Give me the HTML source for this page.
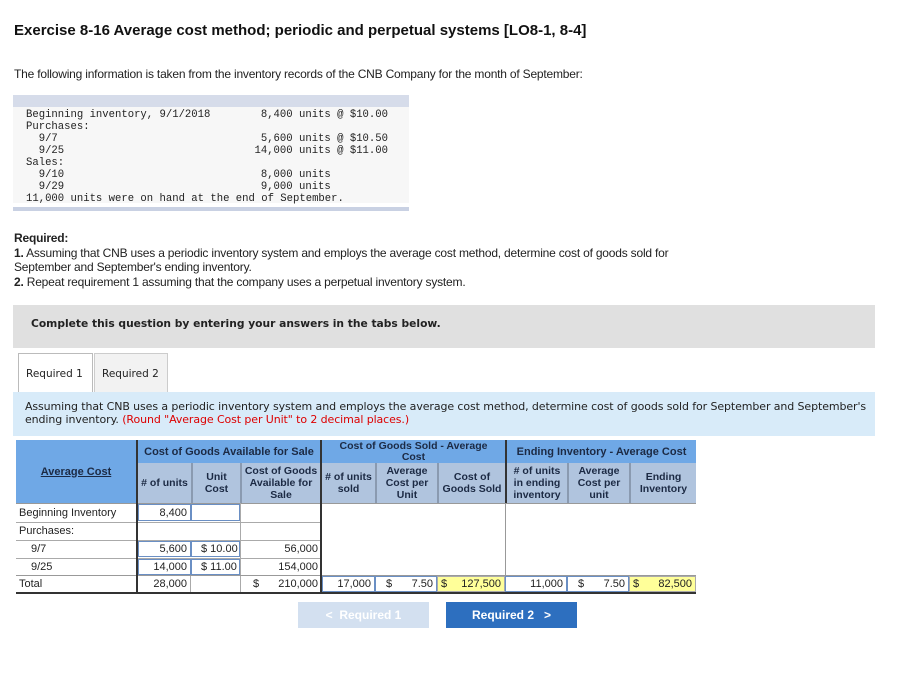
<!DOCTYPE html>
<html><head><meta charset="utf-8"><style>
*{margin:0;padding:0;box-sizing:border-box}
body{width:919px;height:691px;background:#fff;position:relative;font-family:"Liberation Sans",Arial,sans-serif;color:#222;overflow:hidden}
.a{position:absolute;white-space:nowrap}
.m{font-family:"Liberation Mono",monospace;font-size:10.6px;color:#222}
.v{font-family:"DejaVu Sans",Verdana,sans-serif}
.c{position:absolute;font-size:11px;display:flex;align-items:center;justify-content:center;text-align:center;line-height:12px;white-space:nowrap}
.h1{background:#6fa8e6;font-weight:bold;color:#1c2a44}
.h2{background:#b0c4de;font-weight:bold;color:#1c2a44;border-left:2px solid #8a9ab0;font-size:10.5px}
.inp{border:1px solid #6a8fc4;background:#fff;justify-content:flex-end;padding-right:3px}
.y{background:#ffff99;border:1px solid #aaa;justify-content:space-between;padding:0 3px}
.lbl{position:absolute;font-size:11px;left:19px}
.line{position:absolute;height:1px;background:#aaa}
</style></head><body>
<div class="a" style="left:14px;top:22px;font-size:15px;font-weight:bold;color:#111">Exercise 8-16 Average cost method; periodic and perpetual systems [LO8-1, 8-4]</div>
<div class="a" style="left:14px;top:67px;font-size:12px;letter-spacing:-0.2px">The following information is taken from the inventory records of the CNB Company for the month of September:</div>

<div class="a" style="left:13px;top:95px;width:396px;height:12px;background:#d6dcea"></div>
<div class="a" style="left:13px;top:107px;width:396px;height:96px;background:#f7f7f7"></div>
<div class="a" style="left:13px;top:207px;width:396px;height:4px;background:#c9d1e3"></div>
<div class="a m" style="left:26px;top:109px;line-height:12px;white-space:pre">Beginning inventory, 9/1/2018
Purchases:
  9/7
  9/25
Sales:
  9/10
  9/29
11,000 units were on hand at the end of September.</div>
<div class="a m" style="left:198px;top:109px;line-height:12px;text-align:right;width:190px;white-space:pre">8,400 units @ $10.00

 5,600 units @ $10.50
14,000 units @ $11.00

8,000 units         
9,000 units         </div>

<div class="a" style="left:14px;top:231px;font-size:12px;line-height:14.5px;letter-spacing:-0.2px"><b>Required:</b><br><b>1.</b> Assuming that CNB uses a periodic inventory system and employs the average cost method, determine cost of goods sold for<br>September and September's ending inventory.<br><b>2.</b> Repeat requirement 1 assuming that the company uses a perpetual inventory system.</div>

<div class="a" style="left:13px;top:305px;width:862px;height:43px;background:#e0e0e0"></div>
<div class="a v" style="left:31px;top:317px;font-size:10.7px;font-weight:bold">Complete this question by entering your answers in the tabs below.</div>

<div class="a v" style="left:18px;top:353px;width:75px;height:40px;border:1px solid #bbb;border-bottom:none;background:#fff;font-size:10.5px;padding:14px 0 0 7px">Required 1</div>
<div class="a v" style="left:94px;top:353px;width:74px;height:39px;border:1px solid #ccc;border-bottom:none;background:#f2f2f2;font-size:10.5px;padding:14px 0 0 7px">Required 2</div>
<div class="a" style="left:13px;top:392px;width:862px;height:44px;background:#d8ebf9"></div>
<div class="a v" style="left:25px;top:401px;font-size:11px;line-height:12.5px;letter-spacing:-0.1px">Assuming that CNB uses a periodic inventory system and employs the average cost method, determine cost of goods sold for September and September's<br>ending inventory. <span style="color:#d00">(Round "Average Cost per Unit" to 2 decimal places.)</span></div>

<div class="c h1" style="left:16px;top:440px;width:120px;height:63px"><u>Average Cost</u></div>
<div class="c h1" style="left:136px;top:440px;width:184px;height:23px;border-left:2px solid #333">Cost of Goods Available for Sale</div>
<div class="c h1" style="left:320px;top:440px;width:185px;height:23px;border-left:2px solid #333;font-size:10.5px;line-height:11px">Cost of Goods Sold - Average<br>Cost</div>
<div class="c h1" style="left:505px;top:440px;width:191px;height:23px;border-left:2px solid #333">Ending Inventory - Average Cost</div>
<div class="c h2" style="left:136px;top:463px;width:55px;height:40px;border-left:2px solid #333"># of units</div>
<div class="c h2" style="left:191px;top:463px;width:49px;height:40px">Unit<br>Cost</div>
<div class="c h2" style="left:240px;top:463px;width:80px;height:40px">Cost of Goods<br>Available for<br>Sale</div>
<div class="c h2" style="left:320px;top:463px;width:55px;height:40px;border-left:2px solid #333"># of units<br>sold</div>
<div class="c h2" style="left:375px;top:463px;width:62px;height:40px">Average<br>Cost per<br>Unit</div>
<div class="c h2" style="left:437px;top:463px;width:68px;height:40px">Cost of<br>Goods Sold</div>
<div class="c h2" style="left:505px;top:463px;width:62px;height:40px;border-left:2px solid #333"># of units<br>in ending<br>inventory</div>
<div class="c h2" style="left:567px;top:463px;width:62px;height:40px">Average<br>Cost per<br>unit</div>
<div class="c h2" style="left:629px;top:463px;width:67px;height:40px">Ending<br>Inventory</div>

<div class="line" style="left:16px;top:503px;width:680px;background:#999"></div>
<div class="lbl" style="top:507px">Beginning Inventory</div>
<div class="line" style="left:16px;top:522px;width:304px"></div>
<div class="lbl" style="top:525px">Purchases:</div>
<div class="line" style="left:16px;top:540px;width:304px"></div>
<div class="lbl" style="top:543px;left:31px">9/7</div>
<div class="line" style="left:16px;top:558px;width:304px"></div>
<div class="lbl" style="top:561px;left:31px">9/25</div>
<div class="line" style="left:16px;top:575px;width:680px;background:#999"></div>
<div class="lbl" style="top:578px">Total</div>
<div class="a" style="left:16px;top:592px;width:680px;height:2px;background:#333"></div>
<div class="a" style="left:136px;top:503px;width:2px;height:91px;background:#333"></div>
<div class="a" style="left:320px;top:503px;width:2px;height:91px;background:#333"></div>
<div class="a" style="left:505px;top:503px;width:1px;height:72px;background:#999"></div>
<div class="line" style="left:240px;top:503px;width:1px;height:72px"></div>

<div class="c inp" style="left:138px;top:504px;width:53px;height:17px">8,400</div>
<div class="c inp" style="left:191px;top:504px;width:49px;height:17px"></div>
<div class="c inp" style="left:138px;top:541px;width:53px;height:16px">5,600</div>
<div class="c inp" style="left:191px;top:541px;width:49px;height:16px;justify-content:flex-start;padding-left:9px">$ 10.00</div>
<div class="c" style="left:240px;top:541px;width:80px;height:16px;justify-content:flex-end;padding-right:2px">56,000</div>
<div class="c inp" style="left:138px;top:559px;width:53px;height:16px">14,000</div>
<div class="c inp" style="left:191px;top:559px;width:49px;height:16px;justify-content:flex-start;padding-left:9px">$ 11.00</div>
<div class="c" style="left:240px;top:559px;width:80px;height:16px;justify-content:flex-end;padding-right:2px">154,000</div>
<div class="c" style="left:138px;top:576px;width:53px;height:16px;justify-content:flex-end;padding-right:3px;border-right:1px solid #aaa">28,000</div>
<div class="c" style="left:240px;top:576px;width:80px;height:16px;justify-content:space-between;padding:0 2px 0 12px;border-left:1px solid #aaa"><span>$</span><span>210,000</span></div>
<div class="c inp" style="left:322px;top:576px;width:53px;height:16px">17,000</div>
<div class="c inp" style="left:375px;top:576px;width:62px;height:16px;justify-content:space-between;padding-left:10px"><span>$</span><span>7.50</span></div>
<div class="c y" style="left:437px;top:576px;width:68px;height:16px"><span>$</span><span>127,500</span></div>
<div class="c inp" style="left:505px;top:576px;width:62px;height:16px">11,000</div>
<div class="c inp" style="left:567px;top:576px;width:62px;height:16px;justify-content:space-between;padding-left:10px"><span>$</span><span>7.50</span></div>
<div class="c y" style="left:629px;top:576px;width:67px;height:16px"><span>$</span><span>82,500</span></div>

<div class="c" style="left:298px;top:602px;width:131px;height:26px;background:#d3e0f0;color:#fff;font-weight:bold;font-size:12px">&lt;&nbsp;&nbsp;Required 1</div>
<div class="c" style="left:446px;top:602px;width:131px;height:26px;background:#2d6fbf;color:#fff;font-weight:bold;font-size:12px">Required 2&nbsp;&nbsp;&nbsp;&gt;</div>
</body></html>
